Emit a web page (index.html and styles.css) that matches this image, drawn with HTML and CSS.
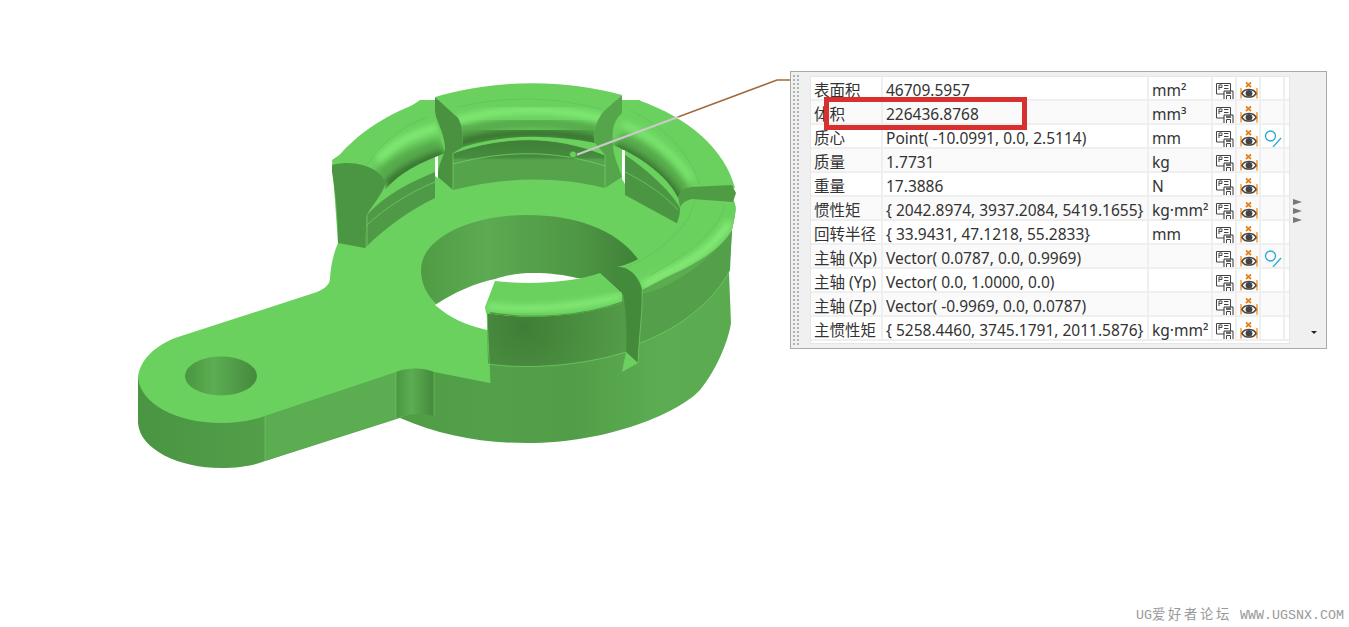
FILE: index.html
```html
<!DOCTYPE html>
<html lang="zh-CN">
<head>
    <meta charset="UTF-8">
    <title>UG 测量体积</title>
    <link rel="stylesheet" href="styles.css">
</head>
<body>
    <svg class="sprites" width="0" height="0">
        <symbol id="ico-save" viewBox="0 -1 18 18">
            <path d="M.5 1.500h14v8h-6v2.500h-8z" fill="#fff" stroke="#444"/>
            <path d="M3 8v-5h3v2.500H3M8 3.500h4.500M8 6.500h4.500" fill="none" stroke="#444"/>
            <path d="M8 9h9v8.500H8z" fill="#fff" stroke="#333"/>
            <path d="M10 9.500h5v2.500h-5z" fill="#666"/>
            <path d="M10.500 13.500h4v4h-4z" fill="#fff" stroke="#444"/>
        </symbol>
        <symbol id="ico-eye" viewBox="0 -1 18 18">
            <path d="M6 .5l5 4.500M11 .5L6 5" fill="none" stroke="#e8831a" stroke-width="1.800"/>
            <path d="M1 6v10.500M1 11.200l4-3.500M1 11.200l4 3.800M17 6v10.500M17 11.200l-4-3.500M17 11.200l-4 3.800" fill="none" stroke="#e8831a" stroke-width="1.200"/>
            <path d="M2 11.300c3.200-5.200 10.800-5.200 14 0-3.200 5.200-10.800 5.200-14 0z" fill="#fff" stroke="#444" stroke-width="1.300"/>
            <circle cx="9" cy="11.300" r="3.400" fill="#444"/>
        </symbol>
        <symbol id="ico-axis" viewBox="0 -1 18 18">
            <circle cx="6.500" cy="6" r="5" fill="none" stroke="#29a9d8" stroke-width="1.300"/>
            <path d="M17 8L9 17" fill="none" stroke="#29a9d8" stroke-width="1.300"/>
        </symbol>
    </svg>

    <main class="viewport">
        <svg class="model" width="1349" height="627" viewBox="0 0 1349 627">
            <defs>
                <linearGradient id="g-side" x1="0" x2="1" y1="0" y2="0">
                    <stop offset="0" stop-color="#4f9c45"/>
                    <stop offset=".3" stop-color="#54a04a"/>
                    <stop offset=".55" stop-color="#529e48"/>
                    <stop offset=".8" stop-color="#5cad51"/>
                    <stop offset="1" stop-color="#5aab4f"/>
                </linearGradient>
                <linearGradient id="g-ear" x1="0" x2="1" y1="0" y2="0">
                    <stop offset="0" stop-color="#4a9541"/>
                    <stop offset=".25" stop-color="#4f9a46"/>
                    <stop offset=".9" stop-color="#5bac50"/>
                </linearGradient>
                <linearGradient id="g-hole" x1="0" x2="1" y1="0" y2="0">
                    <stop offset="0" stop-color="#4f9c45"/>
                    <stop offset=".3" stop-color="#5caa51"/>
                    <stop offset=".7" stop-color="#4f9845"/>
                    <stop offset="1" stop-color="#3f8037"/>
                </linearGradient>
                <linearGradient id="g-small" x1="0" x2="1" y1="0" y2="0">
                    <stop offset="0" stop-color="#4a9541"/>
                    <stop offset=".4" stop-color="#5cae52"/>
                    <stop offset="1" stop-color="#45893d"/>
                </linearGradient>
                <linearGradient id="g-wall" x1="0" x2="0" y1="0" y2="1">
                    <stop offset="0" stop-color="#3f7f37"/>
                    <stop offset=".35" stop-color="#468c3e"/>
                    <stop offset=".4" stop-color="#55a34b"/>
                    <stop offset="1" stop-color="#55a34b"/>
                </linearGradient>
                <radialGradient id="g-front" gradientUnits="userSpaceOnUse" cx="525" cy="328" r="115">
                    <stop offset="0" stop-color="#3f7d36"/>
                    <stop offset="1" stop-color="#56a04b"/>
                </radialGradient>
                <filter id="soft" x="-10%" y="-30%" width="120%" height="160%">
                    <feGaussianBlur stdDeviation="3"/>
                </filter>
                <clipPath id="clip-left"><path d="M332 165C352 136 384 116 418 103L435 117L445 153C420 163 400 172 385 190C384 175 370 163 347 163Z"/></clipPath>
                <clipPath id="clip-mid"><path d="M435 97C495 79 565 79 622 95L603 112C594 125 592 135 595 143C550 134 505 134 463 147C463 135 462 125 458 118Z"/></clipPath>
                <clipPath id="clip-right"><path d="M638 100C690 118 725 150 735 188L690 187C684 189 680 192 678 198C670 180 645 158 613 145C612 132 612 122 622 113Z"/></clipPath>
                <clipPath id="clip-fr"><path d="M733 202C737 205 736 212 732 230C722 248 700 262 667 277L642 290C640 278 628 270 617 267C640 262 665 245 677 223C680 215 680 212 680 207C684 201 688 200 692 200Z"/></clipPath>
                <clipPath id="clip-fl"><path d="M495 281C530 285 570 283 600 273L622 293V303C580 317 530 320 486 313L485 307Z"/></clipPath>
            </defs>

            <!-- side walls -->
            <path d="M380 200H733C737 205 736 212 732 230L729 273L731 323C728 343 715 372 700 390C680 412 610 443 527 443C480 443 440 435 400 418L380 400Z" fill="url(#g-side)"/>
            <path d="M138 377V423C140 450 180 468 221 468C240 468 255 465 265 461L400 418L420 410V370H300L180 370Z" fill="url(#g-ear)"/>
            <path d="M265 416L396 372V418L265 461Z" fill="#5cad51"/>
            <path d="M396 372C410 367 425 368 434 372V416C425 413 410 413 396 418Z" fill="url(#g-small)"/>
            <path d="M265 416V461M396 372V418M434 372V416" stroke="#6fce63" stroke-width=".6" fill="none"/>
            <path d="M640 295C680 285 715 255 732 230L730 270C716 298 683 327 640 343Z" fill="#549f4a"/>
            <path d="M730 270C716 298 683 327 640 343" stroke="#72d166" stroke-width=".7" fill="none"/>

            <!-- top face -->
            <path d="M338 243L332 160L420 100H640L685 215L670 255L620 278L487 310L490 383L434 372C425 368 410 367 396 372L265 416C250 421 235 423 221 423C175 423 140 403 138 377C140 360 155 345 178 337L317 292C326 288 330 284 330 278C331 265 333 255 338 243Z" fill="#6ad15f"/>

            <!-- big hole -->
            <path d="M421 270C421 238 470 215 527 215C580 215 620 232 640 262L640 290L487 328C445 318 421 298 421 270Z" fill="url(#g-hole)"/>
            <path d="M435 305C455 292 475 283 495 279C510 274 522 273 533 273C550 273 565 275 577 278L600 280L600 300L487 330C465 325 450 318 435 305Z" fill="#fff"/>

            <!-- small hole -->
            <ellipse cx="221" cy="376" rx="36" ry="19.500" fill="url(#g-small)"/>

            <!-- inner walls -->
            <path d="M367 215C385 195 410 182 435 172V198C410 210 385 228 365 248Z" fill="#4f9a46"/>
            <path d="M367 225C385 208 410 192 435 182" stroke="#72d166" stroke-width=".7" fill="none"/>
            <path d="M453 153C505 135 555 135 605 155V188C555 176 505 177 453 190Z" fill="url(#g-wall)"/>
            <path d="M453 164C505 150 555 150 605 166" stroke="#72d166" stroke-width=".8" fill="none"/>
            <path d="M453 153C505 135 555 135 605 155" stroke="#72d166" stroke-width=".8" fill="none"/>
            <path d="M625 155C645 168 670 190 680 208V225L625 195Z" fill="#4b9642"/>
            <path d="M625 172C645 182 665 195 678 210" stroke="#72d166" stroke-width=".7" fill="none"/>
            <path d="M435 150h3v28l-3-2zM622 150h3v34l-3-5z" fill="#fff"/>
            <path d="M487 313C530 320 585 317 626 301L626 352C585 365 530 370 488 364Z" fill="url(#g-front)"/>
            <path d="M488 364C530 370 585 365 626 352" stroke="#72d166" stroke-width=".7" fill="none"/>
            <path d="M487 313L490 383" stroke="#72d166" stroke-width=".7" fill="none"/>

            <!-- ring: left segment -->
            <path d="M332 165C352 136 384 116 418 103L435 117L445 153C420 163 400 172 385 190C384 175 370 163 347 163Z" fill="#6ad15f"/>
            <g clip-path="url(#clip-left)">
                <path d="M378 176C396 160 418 150 442 144" stroke="#56ab4b" stroke-width="12" fill="none" filter="url(#soft)"/>
                <path d="M386 186C402 170 422 160 445 154" stroke="#3a7733" stroke-width="12" fill="none" filter="url(#soft)"/>
                <path d="M378 160C393 144 410 135 438 127" stroke="#86f078" stroke-width="6" fill="none" filter="url(#soft)"/>
                <path d="M367 165C382 142 400 128 427 117" stroke="#5fc054" stroke-width=".6" fill="none"/>
            </g>
            <path d="M332 165C340 163 347 163 347 163C370 163 384 175 385 182C385 192 372 205 367 215L365 248L338 243C338 215 335 190 332 172Z" fill="#4b9642"/>
            <path d="M367 215V248" stroke="#72d166" stroke-width=".7"/>

            <!-- ring: middle segment -->
            <path d="M435 97C495 79 565 79 622 95L603 112C594 125 592 135 595 143C550 134 505 134 463 147C463 135 462 125 458 118Z" fill="#6ad15f"/>
            <g clip-path="url(#clip-mid)">
                <path d="M455 134C505 120 555 120 605 132" stroke="#56ab4b" stroke-width="12" fill="none" filter="url(#soft)"/>
                <path d="M455 144C505 130 555 130 605 142" stroke="#3a7733" stroke-width="12" fill="none" filter="url(#soft)"/>
                <path d="M455 121C505 107 555 107 605 119" stroke="#86f078" stroke-width="6" fill="none" filter="url(#soft)"/>
                <path d="M458 107C505 96 555 96 603 110" stroke="#5fc054" stroke-width=".6" fill="none"/>
            </g>
            <path d="M435 97L458 118C462 125 463 135 463 147L453 153V190L438 177C437 165 445 155 445 148C444 130 435 120 435 110Z" fill="#4a9240"/>
            <path d="M622 95L603 112C594 125 592 135 595 143L605 155V188L622 177C618 165 613 155 613 145C612 132 622 120 622 110Z" fill="#55a64b"/>
            <path d="M453 153V190M605 155V188" stroke="#72d166" stroke-width=".7"/>

            <!-- ring: right segment -->
            <path d="M638 100C690 118 725 150 735 188L690 187C684 189 680 192 678 198C670 180 645 158 613 145C612 132 612 122 622 113Z" fill="#6ad15f"/>
            <g clip-path="url(#clip-right)">
                <path d="M620 138C647 148 670 168 686 194" stroke="#56ab4b" stroke-width="12" fill="none" filter="url(#soft)"/>
                <path d="M614 147C641 157 664 177 680 201" stroke="#3a7733" stroke-width="12" fill="none" filter="url(#soft)"/>
                <path d="M622 124C650 134 674 154 692 180" stroke="#7fe872" stroke-width="6" fill="none" filter="url(#soft)"/>
                <path d="M630 110C660 125 688 148 700 185" stroke="#5fc054" stroke-width=".6" fill="none"/>
            </g>

            <!-- ring: front segments -->
            <path d="M733 201C737 205 736 212 732 230C722 248 700 262 667 277L642 290C640 278 628 270 617 267C640 262 665 245 677 223C680 215 680 212 680 205C684 199 688 198 692 198Z" fill="#6ad15f"/>
            <g clip-path="url(#clip-fr)">
                <path d="M730 222C715 245 695 260 664 274L642 286" stroke="#8bf27c" stroke-width="6" fill="none" filter="url(#soft)"/>
                <path d="M725 205C718 230 695 250 650 275" stroke="#5fc054" stroke-width=".6" fill="none"/>
                <path d="M695 200C690 225 665 250 625 268" stroke="#5fc054" stroke-width=".6" fill="none"/>
            </g>
            <path d="M678 197C680 192 684 188 690 187L732 185L736 193L733 202L692 199C687 200 683 202 680 207Z" fill="#4f9c45"/>
            <path d="M495 281C530 285 570 283 600 273L622 293V303C580 317 530 320 486 313L485 307Z" fill="#6ad15f"/>
            <g clip-path="url(#clip-fl)">
                <path d="M487 306C530 312 580 306 622 296" stroke="#8bf27c" stroke-width="5" fill="none" filter="url(#soft)"/>
                <path d="M490 313C530 320 585 317 626 301" stroke="#4f9c45" stroke-width="2" fill="none"/>
            </g>

            <!-- slot through the front of the ring -->
            <path d="M613 280V272C613 268 616 267 618 267C625 267 628 269 633 273C638 278 641 284 642 290C643 310 639 335 638 363L626 352C627 330 626 310 623 293C620 288 616 285 613 280Z" fill="#438a3b"/>
            <path d="M622 372L626 352L638 363Z" fill="#6ad15f"/>
            <path d="M642 290C643 310 639 335 638 363" stroke="#72d166" stroke-width=".7" fill="none"/>

            <!-- measure leader -->
            <path d="M790 80H777L678 117" stroke="#a06a3c" stroke-width="1.500" fill="none"/>
            <path d="M678 117L576 155" stroke="#ccc8cc" stroke-width="2" fill="none"/>
            <circle cx="573" cy="155" r="4" fill="#4f9c45"/>
            <circle cx="573" cy="154.500" r="2.800" fill="#69d05e"/>
        </svg>

        <section class="panel">
            <div class="grip"></div>
            <table class="props">
                <tr><td class="name">表面积</td><td class="val">46709.5957</td><td class="unit">mm²</td><td class="ico"><svg><use href="#ico-save"/></svg></td><td class="ico"><svg><use href="#ico-eye"/></svg></td><td class="ico"></td><td class="end"></td></tr>
                <tr><td class="name">体积</td><td class="val">226436.8768</td><td class="unit">mm³</td><td class="ico"><svg><use href="#ico-save"/></svg></td><td class="ico"><svg><use href="#ico-eye"/></svg></td><td class="ico"></td><td class="end"></td></tr>
                <tr><td class="name">质心</td><td class="val">Point( -10.0991, 0.0, 2.5114)</td><td class="unit">mm</td><td class="ico"><svg><use href="#ico-save"/></svg></td><td class="ico"><svg><use href="#ico-eye"/></svg></td><td class="ico"><svg><use href="#ico-axis"/></svg></td><td class="end"></td></tr>
                <tr><td class="name">质量</td><td class="val">1.7731</td><td class="unit">kg</td><td class="ico"><svg><use href="#ico-save"/></svg></td><td class="ico"><svg><use href="#ico-eye"/></svg></td><td class="ico"></td><td class="end"></td></tr>
                <tr><td class="name">重量</td><td class="val">17.3886</td><td class="unit">N</td><td class="ico"><svg><use href="#ico-save"/></svg></td><td class="ico"><svg><use href="#ico-eye"/></svg></td><td class="ico"></td><td class="end"></td></tr>
                <tr><td class="name">惯性矩</td><td class="val">{ 2042.8974, 3937.2084, 5419.1655}</td><td class="unit">kg·mm²</td><td class="ico"><svg><use href="#ico-save"/></svg></td><td class="ico"><svg><use href="#ico-eye"/></svg></td><td class="ico"></td><td class="end"></td></tr>
                <tr><td class="name">回转半径</td><td class="val">{ 33.9431, 47.1218, 55.2833}</td><td class="unit">mm</td><td class="ico"><svg><use href="#ico-save"/></svg></td><td class="ico"><svg><use href="#ico-eye"/></svg></td><td class="ico"></td><td class="end"></td></tr>
                <tr><td class="name">主轴 (Xp)</td><td class="val">Vector( 0.0787, 0.0, 0.9969)</td><td class="unit"></td><td class="ico"><svg><use href="#ico-save"/></svg></td><td class="ico"><svg><use href="#ico-eye"/></svg></td><td class="ico"><svg><use href="#ico-axis"/></svg></td><td class="end"></td></tr>
                <tr><td class="name">主轴 (Yp)</td><td class="val">Vector( 0.0, 1.0000, 0.0)</td><td class="unit"></td><td class="ico"><svg><use href="#ico-save"/></svg></td><td class="ico"><svg><use href="#ico-eye"/></svg></td><td class="ico"></td><td class="end"></td></tr>
                <tr><td class="name">主轴 (Zp)</td><td class="val">Vector( -0.9969, 0.0, 0.0787)</td><td class="unit"></td><td class="ico"><svg><use href="#ico-save"/></svg></td><td class="ico"><svg><use href="#ico-eye"/></svg></td><td class="ico"></td><td class="end"></td></tr>
                <tr><td class="name">主惯性矩</td><td class="val">{ 5258.4460, 3745.1791, 2011.5876}</td><td class="unit">kg·mm²</td><td class="ico"><svg><use href="#ico-save"/></svg></td><td class="ico"><svg><use href="#ico-eye"/></svg></td><td class="ico"></td><td class="end"></td></tr>
            </table>
            <div class="side">
                <div class="arrows"><i></i><i></i><i></i></div>
                <div class="drop"></div>
            </div>
            <div class="mark"></div>
        </section>

        <p class="stamp">UG<span class="cjk">爱好者论坛</span> WWW.UGSNX.COM</p>
    </main>
</body>
</html>
```

FILE: styles.css
```css
body {
    margin: 0;
    background: #fff;
    font-family: "Noto Sans", "Noto Sans CJK SC", sans-serif;
    overflow: hidden;
}

.sprites {
    position: absolute;
}

.viewport {
    position: relative;
    width: 1349px;
    height: 627px;
    overflow: hidden;
}

.model {
    position: absolute;
    left: 0;
    top: 0;
}

.panel {
    position: absolute;
    left: 790px;
    top: 71px;
    width: 535px;
    height: 271px;
    display: flex;
    align-items: flex-start;
    padding: 5px 0 0 0;
    background: #f0f0f0;
    border: 1px solid #a9a9a9;
}

.grip {
    flex: none;
    width: 8px;
    height: 273px;
    margin: -3px 11px 0 0;
    margin-left: 1px;
    background-image: radial-gradient(#b2b2b2 1.200px, transparent 1.500px);
    background-size: 4px 4px;
}

.props {
    flex: none;
    width: 478px;
    table-layout: fixed;
    border-collapse: separate;
    border-spacing: 0;
    border-bottom: 2px solid #fff;
    background: #fff;
    outline: 1px solid #e6e6e6;
    font-size: 15.500px;
    color: #333;
}

.props tr {
    height: 24px;
}

.props tr:nth-child(even) {
    background: #fafafa;
}

.props td {
    box-sizing: border-box;
    height: 24px;
    padding: 6px 0 0 3px;
    border: 2px solid #efefef;
    border-width: 0 2px 2px 0;
    white-space: nowrap;
    line-height: 15px;
    vertical-align: top;
}

.name {
    width: 72px;
}

.val {
    width: 266px;
}

.unit {
    width: 64px;
}

.props td.ico {
    width: 24px;
    padding: 0;
}

.props td.end {
    padding: 0;
    border-right: 0;
}

.ico svg {
    display: block;
    width: 18px;
    height: 18px;
    margin: 4px 0 0 3px;
}

.side {
    position: relative;
    flex: 1;
}

.arrows {
    position: absolute;
    left: 4px;
    top: 122px;
    display: flex;
    flex-direction: column;
    gap: 3px;
}

.arrows i {
    width: 0;
    height: 0;
    border-left: 9px solid #777;
    border-top: 3px solid transparent;
    border-bottom: 3px solid transparent;
}

.drop {
    position: absolute;
    left: 22px;
    top: 254px;
    width: 0;
    height: 0;
    border-top: 3px solid #222;
    border-left: 3px solid transparent;
    border-right: 3px solid transparent;
}

/* red box over the volume row */
.mark {
    position: absolute;
    left: 33px;
    top: 25px;
    width: 193px;
    height: 23px;
    border: 5px solid #d8302f;
}

.stamp {
    position: absolute;
    left: 1136px;
    top: 607px;
    margin: 0;
    font: 13.330px/18px "Liberation Mono", "Noto Sans CJK SC", monospace;
    color: #999;
    white-space: pre;
}

.cjk {
    letter-spacing: 2.670px;
}
```
